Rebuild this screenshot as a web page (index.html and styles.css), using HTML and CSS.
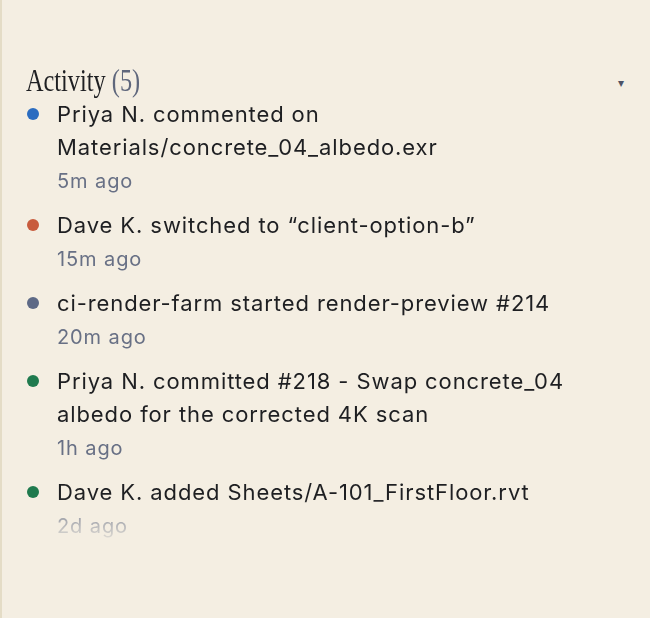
FILE: index.html
```html
<!DOCTYPE html>
<html lang="en">
<head>
<meta charset="utf-8">
<title>Activity</title>
<link rel="stylesheet" href="styles.css">
</head>
<body>
<aside class="panel">
  <header class="panel-head">
    <h2 class="title"><span class="title-text">Activity <span class="count">(5)</span></span></h2>
    <button class="toggle" aria-label="Collapse">▾</button>
  </header>
  <ul class="feed">
    <li class="item">
      <span class="dot dot-blue"></span>
      <div class="body">
        <p class="msg">Priya N. commented on Materials/concrete_04_albedo.exr</p>
        <p class="meta">5m ago</p>
      </div>
    </li>
    <li class="item">
      <span class="dot dot-orange"></span>
      <div class="body">
        <p class="msg">Dave K. switched to “client-option-b”</p>
        <p class="meta">15m ago</p>
      </div>
    </li>
    <li class="item">
      <span class="dot dot-slate"></span>
      <div class="body">
        <p class="msg">ci-render-farm started render-preview #214</p>
        <p class="meta">20m ago</p>
      </div>
    </li>
    <li class="item">
      <span class="dot dot-green"></span>
      <div class="body">
        <p class="msg">Priya N. committed #218 - Swap concrete_04 albedo for the corrected 4K scan</p>
        <p class="meta">1h ago</p>
      </div>
    </li>
    <li class="item">
      <span class="dot dot-green"></span>
      <div class="body">
        <p class="msg">Dave K. added Sheets/A-101_FirstFloor.rvt</p>
        <p class="meta">2d ago</p>
      </div>
    </li>
  </ul>
</aside>
</body>
</html>
```
FILE: styles.css
```css
html, body {
  margin: 0;
  padding: 0;
  height: 100%;
}
body {
  background: #f4eee2;
  font-family: Inter, "Noto Sans", sans-serif;
  color: #1e1f22;
}
.panel {
  box-sizing: border-box;
  height: 618px;
  border-left: 2px solid #e4dcc6;
  padding: 62px 24px 0 24px;
}
.panel-head {
  display: flex;
  align-items: center;
  justify-content: space-between;
  height: 36px;
}
.title {
  margin: 0;
  font-family: "Liberation Serif", serif;
  font-weight: 400;
  font-size: 32px;
  line-height: 36px;
  color: #1e1f22;
  white-space: nowrap;
}
.title-text {
  display: inline-block;
  transform: scaleX(0.76);
  transform-origin: left center;
}
.count {
  color: #5f677c;
}
.toggle {
  border: 0;
  background: none;
  padding: 0;
  font-size: 12px;
  color: #4d5366;
  line-height: 1;
  margin-top: 6px;
  margin-right: 2px;
}
.feed {
  list-style: none;
  margin: 0;
  padding: 0;
  height: 448px;
  overflow: hidden;
  -webkit-mask-image: linear-gradient(to bottom, #000 calc(100% - 48px), transparent 100%);
  mask-image: linear-gradient(to bottom, #000 calc(100% - 48px), transparent 100%);
}
.item {
  display: flex;
  align-items: flex-start;
  gap: 18px;
  margin-bottom: 11px;
}
.dot {
  flex: none;
  width: 12px;
  height: 12px;
  border-radius: 50%;
  margin-top: 10px;
  margin-left: 1px;
}
.dot-blue { background: #2b6cc0; }
.dot-orange { background: #c85b3d; }
.dot-slate { background: #5d6986; }
.dot-green { background: #1f7a4e; }
.body {
  flex: 1;
  min-width: 0;
}
.msg {
  margin: 0;
  font-size: 22px;
  line-height: 33px;
  letter-spacing: 0.9px;
}
.meta {
  margin: 0;
  font-size: 20px;
  line-height: 34px;
  letter-spacing: 0.9px;
  color: #687085;
}
```
